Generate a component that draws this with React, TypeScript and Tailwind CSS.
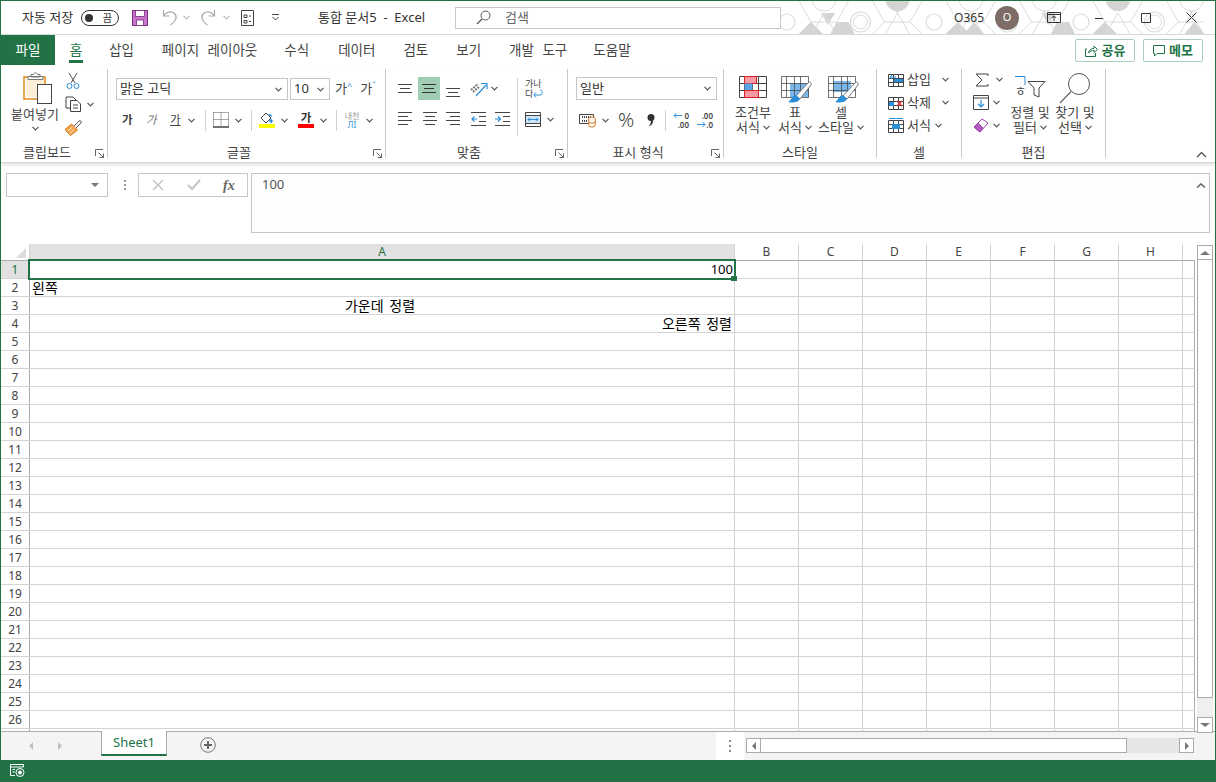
import React from "react"

const blue = "#2b8fd8"
const dark = "#444444"

function Chev({ className = "" }: { className?: string }) {
  return (
    <svg width="7" height="5" viewBox="0 0 7 5" className={className}>
      <path d="M0.5 0.8 L3.5 3.8 L6.5 0.8" fill="none" stroke="#555" strokeWidth="1.2" />
    </svg>
  )
}

function Launcher() {
  return (
    <svg width="9" height="9" viewBox="0 0 9 9">
      <path d="M0.5 7V0.5H8M8.5 8.5L3.5 3.5M8.5 4.5V8.5H4.5" fill="none" stroke="#666" strokeWidth="1" />
    </svg>
  )
}

function Group({ width, label, children, launcher = false, labelClass = "" }: { width: number; label: string; children: React.ReactNode; launcher?: boolean; labelClass?: string }) {
  return (
    <div className="mt-[4px] h-[89px] border-r border-[#c8c8c8]" style={{ width }}>
      <div className="flow-root h-[74px]">{children}</div>
      <div className={"relative flex h-[20px] items-center justify-center text-[13px] text-[#444] " + labelClass}>
        {label}
        {launcher && <span className="absolute right-[3px] top-[6px] flex"><Launcher /></span>}
      </div>
    </div>
  )
}

function HLines({ lines, active = false }: { lines: number[][]; active?: boolean }) {
  return (
    <svg width="16" height="16" viewBox="0 0 16 16" className="block">
      {lines.map((l, i) => (
        <path key={i} d={`M${l[0]} ${l[2] + 0.5}H${l[1]}`} stroke={active ? "#333" : dark} strokeWidth="1" />
      ))}
    </svg>
  )
}

function Save() {
  return (
    <svg width="16" height="16" viewBox="0 0 16 16">
      <path d="M0.5 0.5H15.5V15.5H0.5Z" fill="#c774c9" stroke="#7a2a80" />
      <rect x="3.5" y="0.5" width="9" height="6" fill="#fff" stroke="#7a2a80" strokeWidth="0.8" />
      <rect x="4.5" y="10" width="7" height="5.5" fill="#fff" stroke="#7a2a80" strokeWidth="0.8" />
    </svg>
  )
}

function Undo({ flip = false }: { flip?: boolean }) {
  return (
    <svg width="16" height="17" viewBox="0 0 16 17" style={{ transform: flip ? "scaleX(-1)" : undefined }}>
      <path d="M1.5 1V7H7.5M1.5 7C4 3 9 1.5 12.5 4.5C15.5 7.5 14.5 12 8.5 16" fill="none" stroke="#aaaaaa" strokeWidth="1.2" />
    </svg>
  )
}

function TitlePattern() {
  const c = "#d4d4d4"
  const line = "#dcdcdc"
  const centers = [12, 85.5, 159, 232.5, 306, 379.5]
  return (
    <svg width="440" height="33" viewBox="0 0 440 33" className="absolute right-0 top-0">
      {centers.map((x, i) => (
        <g key={x}>
          {i % 2 === 0 && <path d={`M${x + 12} 33L${x + 24} 21L${x + 36} 33Z`} fill={c} />}
          {i % 2 === 1 && <path d={`M${x + 25} 0H${x + 49}L${x + 37} 12Z`} fill={c} />}
          {i % 3 === 1 && <path d={`M${x - 24} 21H${x - 12}L${x - 6} 33H${x - 30}Z`} fill={c} />}
          {i % 3 === 2 && <path d={`M${x + 40} 21L${x + 50} 33H${x + 30}Z`} fill={c} />}
          {i % 3 === 0 && <path d={`M${x + 34} 12L${x + 48} 12L${x + 41} 24Z`} fill={c} />}
          <path d={`M${x - 24} 21L${x - 12} 0M${x + 12} 0L${x + 24} 21L${x + 12} 33M${x - 24} 21L${x - 12} 33M${x + 24} 21H${x + 49.5}M${x + 25} 33L${x + 37} 12L${x + 49} 33`} fill="none" stroke={line} />
          <circle cx={x + 37} cy={-2} r={12} fill={i % 3 === 1 ? c : "#fff"} stroke={line} />
          <circle cx={x} cy={21} r={i % 2 === 1 ? 10 : 8} fill="#fff" stroke={line} strokeWidth="1.2" />
          {i % 2 === 1 && <circle cx={x} cy={21} r={7} fill={i === 3 ? c : "#fff"} stroke={line} />}
        </g>
      ))}
    </svg>
  )
}

function TitleBar() {
  return (
    <div className="relative flex h-[34px] items-center border-b border-[#d8d8d8] bg-white text-[13px] text-[#333]">
      <TitlePattern />
      <span className="ml-[21px] w-[59px] whitespace-nowrap">자동 저장</span>
      <div className="flex h-[16px] w-[38px] items-center justify-between rounded-full border border-[#333] pl-[3px] pr-[6px]">
        <span className="h-[8px] w-[8px] rounded-full bg-[#333]" />
        <span className="text-[10px] leading-none">끔</span>
      </div>
      <div className="ml-[13px] flex"><Save /></div>
      <div className="ml-[14px] flex"><Undo /></div>
      <Chev className="ml-[5px] opacity-40" />
      <div className="ml-[10px] flex"><Undo flip /></div>
      <Chev className="ml-[7px] opacity-40" />
      <svg width="13" height="16" viewBox="0 0 13 16" className="ml-[11px]">
        <path d="M0.5 0.5H12.5V15.5H0.5Z M3 5H6V7.5H3Z M8 6H10 M3 10.5H6V13H3Z M8 11.5H10" fill="none" stroke="#444" />
      </svg>
      <svg width="9" height="7" viewBox="0 0 9 7" className="ml-[17px]">
        <path d="M1 0.5H8M1.5 3L4.5 6L7.5 3" fill="none" stroke="#444" />
      </svg>
      <span className="ml-[38px] w-[137px] whitespace-nowrap text-[13px]">통합 문서5&nbsp; -&nbsp; Excel</span>
      <div className="relative flex h-[22px] w-[326px] items-center border border-[#c8c8c8] bg-white">
        <svg width="15" height="15" viewBox="0 0 15 15" className="ml-[20px]">
          <circle cx="9.5" cy="5.5" r="4.5" fill="none" stroke="#555" />
          <path d="M6 9L1 14" stroke="#555" strokeWidth="1.2" />
        </svg>
        <span className="ml-[14px] text-[#666]">검색</span>
      </div>
      <div className="relative ml-auto flex items-center">
        <span className="text-[12px] text-[#333]">O365</span>
        <span className="ml-[11px] flex h-[24px] w-[24px] items-center justify-center rounded-full bg-[#7d6d66] text-[11px] text-white">O</span>
        <svg width="14" height="11" viewBox="0 0 14 11" className="ml-[28px]">
          <path d="M0.5 0.5H13.5V10.5H0.5Z M0.5 2.5H13.5" fill="none" stroke="#333" />
          <path d="M7 9V4M4.8 6L7 3.8L9.2 6" fill="none" stroke="#333" />
        </svg>
        <svg width="10" height="10" viewBox="0 0 10 10" className="ml-[33px]"><path d="M1 5.5H9" stroke="#333" /></svg>
        <svg width="10" height="10" viewBox="0 0 10 10" className="ml-[37px]"><path d="M0.5 0.5H9.5V9.5H0.5Z" fill="none" stroke="#333" /></svg>
        <svg width="11" height="11" viewBox="0 0 11 11" className="ml-[35px] mr-[18px]"><path d="M0.5 0.5L10.5 10.5M10.5 0.5L0.5 10.5" stroke="#333" /></svg>
      </div>
    </div>
  )
}

const tabs: [string, number][] = [
  ["삽입", 26], ["페이지 레이아웃", 28], ["수식", 27], ["데이터", 29], ["검토", 28], ["보기", 28], ["개발 도구", 28], ["도움말", 26],
]

function Tabs() {
  return (
    <div className="flex h-[30px] items-stretch bg-white text-[13.5px] text-[#444] [word-spacing:5px]">
      <div className="flex w-[54px] items-center justify-center bg-[#217346] text-white">파일</div>
      <div className="relative ml-[14px] flex w-[14px] items-center justify-center text-[#217346]">
        홈
        <span className="absolute bottom-[2px] left-0 h-[3px] w-[14px] bg-[#217346]" />
      </div>
      {tabs.map(([t, ml]) => (
        <div key={t} className="flex items-center whitespace-nowrap" style={{ marginLeft: ml }}>{t}</div>
      ))}
      <div className="ml-auto mr-[12px] flex items-center gap-[8px] pt-[1px] [word-spacing:0]">
        <div className="flex h-[23px] w-[60px] items-center justify-center gap-[4px] rounded-[2px] border border-[#a9d0bb] text-[13px] font-bold text-[#217346]">
          <svg width="13" height="12" viewBox="0 0 13 12"><path d="M2 4H0.5V11.5H10.5V8M3.5 8C4 5 6 3.5 9 3.5V1L12.5 4.5L9 7.5V5.5C7 5.5 5 6 3.5 8Z" fill="none" stroke="#217346" /></svg>
          공유
        </div>
        <div className="flex h-[23px] w-[60px] items-center justify-center gap-[4px] rounded-[2px] border border-[#a9d0bb] text-[13px] font-bold text-[#217346]">
          <svg width="12" height="12" viewBox="0 0 12 12"><path d="M0.5 0.5H11.5V8.5H4L1.5 11V8.5H0.5Z" fill="none" stroke="#217346" /></svg>
          메모
        </div>
      </div>
    </div>
  )
}

function Grid3({ kind }: { kind: "cond" | "table" | "cell" }) {
  return (
    <svg width="32" height="27" viewBox="0 0 32 27" className="block">
      {kind === "table" && <rect x="9" y="7" width="19" height="14" fill="#7ab8ec" />}
      {kind === "cell" && <rect x="5" y="5" width="18" height="11" fill="#7ab8ec" />}
      <path d="M0.5 0.5H27.5V21.5H0.5Z M0.5 7.5H27.5 M0.5 14.5H27.5 M5.5 0.5V21.5 M13.5 0.5V21.5 M19.5 0.5V21.5" fill="none" stroke="#444" strokeWidth="1" opacity={kind === "cond" ? 1 : 0.75} />
      {kind === "cond" && <>
        <rect x="5.5" y="0.5" width="12" height="7" fill="#f59aa2" stroke="#e01f26" />
        <rect x="5.5" y="7.5" width="8" height="7" fill="#5aa5e6" />
        <rect x="5.5" y="14.5" width="14" height="7" fill="#f59aa2" stroke="#e01f26" />
      </>}
      {kind !== "cond" && <>
        <path d="M15 20L27 7C29 5 31 7 30 9L19 23Z" fill="#fff" stroke="#777" />
        <path d="M7 26C10 25 11 19 15 19L19 23C17 27 11 27 7 26Z" fill={blue} />
      </>}
    </svg>
  )
}

function Clipboard() {
  return (
    <div className="flex">
      <div className="ml-[10px] flex w-[48px] flex-col items-center">
        <svg width="30" height="32" viewBox="0 0 30 32" className="mt-[3px] translate-x-[3px]">
          <path d="M1 5H22V27H1Z" fill="#fff" stroke="#e08a1e" strokeWidth="1.5" />
          <path d="M3 7H21V25H3Z" fill="#fdeed8" />
          <path d="M8 5V2.5H10.5C11.5 0 13.5 0 14.5 2.5H17V5Z M5 4.5H20V7.5H5Z" fill="#fff" stroke="#777" />
          <rect x="14.5" y="12.5" width="14" height="19" fill="#fff" stroke="#444" />
        </svg>
        <span className="mt-[3px] whitespace-nowrap text-[13px] leading-[15px] text-[#444]">붙여넣기</span>
        <Chev className="mt-[4px]" />
      </div>
      <div className="ml-[6px] flex flex-col">
        <svg width="16" height="18" viewBox="0 0 16 18" className="mt-[3px]">
          <path d="M4 1L10 11M12 1L6 11" stroke="#555" fill="none" />
          <circle cx="4.5" cy="14" r="2.5" fill="none" stroke={blue} /><circle cx="11.5" cy="14" r="2.5" fill="none" stroke={blue} />
        </svg>
        <div className="mt-[6px] flex items-center">
          <svg width="16" height="16" viewBox="0 0 16 16">
            <path d="M5 12H1V1H8L11 4" fill="none" stroke="#444" />
            <path d="M5.5 4.5H12L15.5 8V15.5H5.5Z M8 9H13 M8 12H13" fill="#fff" stroke="#444" />
          </svg>
          <Chev className="ml-[6px]" />
        </div>
        <svg width="17" height="16" viewBox="0 0 17 16" className="mt-[8px]">
          <path d="M0 9.5L6.5 4L12.5 10L5.5 15.5Z" fill="#f3a64d" stroke="#d6761a" />
          <path d="M3 11L7.5 7M5 13.5L9 9.5" stroke="#fff" strokeWidth="0.8" />
          <path d="M9 6L14 1C15 0 17 1 16 3L11 8" fill="#fff" stroke="#555" />
        </svg>
      </div>
    </div>
  )
}

function Select({ className, text }: { className: string; text: string }) {
  return (
    <div className={"flex h-[22px] items-center justify-between border border-[#c6c6c6] bg-white pl-[3px] pr-[5px] text-[13px] text-[#333] " + className}>
      <span>{text}</span>
      <Chev />
    </div>
  )
}

function Sep({ className = "" }: { className?: string }) {
  return <span className={"h-[21px] w-px bg-[#d0d0d0] " + className} />
}

function FontGroup() {
  return (
    <div className="pl-[8px]">
      <div className="mt-[9px] flex items-center">
        <Select className="w-[172px]" text="맑은 고딕" />
        <Select className="ml-[2px] w-[40px]" text="10" />
        <span className="ml-[5px] text-[13px] text-[#444]">가<sup className="text-[9px] text-[#2b8fd8]">^</sup></span>
        <span className="ml-[8px] text-[13px] text-[#444]">가<sup className="text-[9px] text-[#2b8fd8]">ˇ</sup></span>
      </div>
      <div className="mt-[9px] flex h-[22px] items-center text-[11.5px] text-[#444]">
        <span className="ml-[6px] w-[13px] font-bold">가</span>
        <span className="ml-[11px] w-[13px] italic text-[#777]">가</span>
        <span className="ml-[11px] w-[13px] underline">가</span>
        <Chev className="ml-[5px]" />
        <Sep className="ml-[10px]" />
        <svg width="16" height="16" viewBox="0 0 16 16" className="ml-[7px]">
          <path d="M0.5 0.5H15.5V14 M0.5 0.5V14 M0.5 7.5H15.5 M8 0.5V14" fill="none" stroke="#555" strokeDasharray="1 1" />
          <path d="M0 15H16" stroke="#111" strokeWidth="1.2" />
        </svg>
        <Chev className="ml-[6px]" />
        <Sep className="ml-[9px]" />
        <div className="ml-[7px] flex w-[16px] flex-col items-center">
          <svg width="14" height="12" viewBox="0 0 14 12">
            <path d="M1 6L6 1L11 6L6 11Z" fill="#fff" stroke="#444" />
            <path d="M11 7C9 8 9 10 11 11C13 10 13 8 11 7Z M8 3C10 1.5 11 2 12 5" fill={blue} stroke={blue} strokeWidth="0.5" />
          </svg>
          <span className="h-[4px] w-[16px] bg-[#ffff00]" />
        </div>
        <Chev className="ml-[6px]" />
        <div className="ml-[10px] flex w-[16px] flex-col items-center">
          <span className="h-[12px] text-[11.5px] font-bold leading-[12px] text-[#333]">가</span>
          <span className="h-[4px] w-[16px] bg-[#ff0000]" />
        </div>
        <Chev className="ml-[6px]" />
        <Sep className="ml-[9px]" />
        <div className="ml-[7px] flex w-[16px] flex-col items-center text-[8px] leading-[9px] text-[#999]">
          <span>내천</span>
          <span className="text-[#2b8fd8]">ЛI</span>
        </div>
        <Chev className="ml-[6px]" />
      </div>
    </div>
  )
}

function Indent({ dir }: { dir: "l" | "r" }) {
  return (
    <svg width="15" height="14" viewBox="0 0 15 14" className="block">
      <path d="M0 0.5H15 M8 4.5H15 M8 9.5H15 M0 13.5H15" stroke={dark} fill="none" />
      <path d={dir === "l" ? "M6 7H1M3.5 4.5L1 7L3.5 9.5" : "M0 7H5M3 4.5L5.5 7L3 9.5"} stroke={blue} fill="none" strokeWidth="1.2" />
    </svg>
  )
}

function AlignGroup() {
  return (
    <div className="pl-[11px]">
      <div className="mt-[8px] flex h-[23px] items-center">
        <div className="w-[16px]"><HLines lines={[[1, 15, 3], [3, 13, 7], [1, 15, 11]]} /></div>
        <div className="ml-[5px] flex h-[23px] w-[22px] items-center justify-center bg-[#a0cdb3]"><HLines lines={[[1, 15, 3], [3, 13, 7], [1, 15, 11]]} active /></div>
        <div className="ml-[5px] mt-[4px] w-[16px]"><HLines lines={[[1, 15, 5], [3, 13, 9], [1, 15, 13]]} /></div>
        <svg width="18" height="16" viewBox="0 0 18 16" className="ml-[9px]">
          <path d="M1 9L8 3 M3 11L9 6" stroke="#777" strokeWidth="2" strokeDasharray="2 1" />
          <path d="M6 15L16 4M11 2.5H17V8" fill="none" stroke={blue} strokeWidth="1.2" />
        </svg>
        <Chev className="ml-[3px]" />
        <Sep className="ml-[19px] h-[58px] translate-y-[18px]" />
        <div className="ml-[7px] flex flex-col text-[9px] leading-[10px] text-[#444]">
          <span>가나</span>
          <span className="flex items-center">다<svg width="10" height="9" viewBox="0 0 10 9"><path d="M1 6H7C10 6 10 1 7 1M3 3.5L0.8 6L3 8.5" fill="none" stroke={blue} /></svg></span>
        </div>
      </div>
      <div className="ml-[1px] mt-[8px] flex h-[22px] items-center">
        <div className="w-[25px]"><HLines lines={[[0, 14, 1], [0, 10, 5], [0, 14, 9], [0, 10, 13]]} /></div>
        <div className="w-[23px]"><HLines lines={[[0, 14, 1], [2, 12, 5], [0, 14, 9], [2, 12, 13]]} /></div>
        <div className="w-[25px]"><HLines lines={[[0, 14, 1], [4, 14, 5], [0, 14, 9], [4, 14, 13]]} /></div>
        <div className="w-[24px]"><Indent dir="l" /></div>
        <div className="w-[30px]"><Indent dir="r" /></div>
        <svg width="16" height="15" viewBox="0 0 16 15">
          <rect x="1" y="3.5" width="14" height="8" fill="#d4e7f8" />
          <path d="M0.5 0.5H15.5V14.5H0.5Z M0.5 3.5H15.5 M0.5 11.5H15.5" fill="none" stroke={dark} />
          <path d="M3 7.5H13M5 5.5L3 7.5L5 9.5M11 5.5L13 7.5L11 9.5" fill="none" stroke={blue} />
        </svg>
        <Chev className="ml-[6px]" />
      </div>
    </div>
  )
}

function NumberGroup() {
  return (
    <div className="pl-[8px]">
      <div className="mt-[8px] flex">
        <Select className="h-[23px] w-[141px]" text="일반" />
      </div>
      <div className="mt-[8px] flex h-[24px] items-center">
        <svg width="18" height="15" viewBox="0 0 18 15" className="ml-[3px]">
          <path d="M0.5 1.5H14.5V10.5H0.5Z" fill="none" stroke={dark} />
          <path d="M3 4H12M3 8H8" stroke={dark} strokeWidth="2" strokeDasharray="1 1" />
          <ellipse cx="13" cy="5.5" rx="3.2" ry="1.5" fill="#fff" stroke="#d6761a" />
          <path d="M9.8 5.5V12.5C10.5 14.5 15.5 14.5 16.2 12.5V5.5" fill="#fff" stroke="#d6761a" />
          <path d="M9.8 9C11 10.5 15 10.5 16.2 9" fill="none" stroke="#d6761a" />
        </svg>
        <Chev className="ml-[5px]" />
        <span className="ml-[9px] w-[17px] text-[20px] font-light leading-none text-[#444]">%</span>
        <svg width="8" height="13" viewBox="0 0 8 13" className="ml-[12px]">
          <circle cx="4" cy="3.5" r="3.5" fill="#333" />
          <path d="M5 5C7.5 8 5 11.5 1.5 12.5C3.5 10.5 4.5 8 3.5 6Z" fill="#333" />
        </svg>
        <Sep className="ml-[10px]" />
        <div className="ml-[7px] flex w-[16px] flex-col text-[8px] font-semibold leading-[9px] text-[#444]">
          <span className="flex items-center justify-between"><svg width="9" height="7" viewBox="0 0 9 7"><path d="M9 3.5H1M3.5 1L1 3.5L3.5 6" fill="none" stroke={blue} /></svg>0</span>
          <span className="text-right">.00</span>
        </div>
        <div className="ml-[8px] flex w-[16px] flex-col text-[8px] font-semibold leading-[9px] text-[#444]">
          <span className="text-right">.00</span>
          <span className="flex items-center justify-between"><svg width="9" height="7" viewBox="0 0 9 7"><path d="M0 3.5H8M5.5 1L8 3.5L5.5 6" fill="none" stroke={blue} /></svg>.0</span>
        </div>
      </div>
    </div>
  )
}

function BigBtn({ icon, top, bottom, width, iconPad = 0 }: { icon: React.ReactNode; top: string; bottom: string; width: number; iconPad?: number }) {
  return (
    <div className="flex flex-col items-center text-[13px] leading-[15px] text-[#444]" style={{ width }}>
      <div className="flex h-[36px] items-start justify-center pt-[7px]" style={{ paddingLeft: iconPad }}>{icon}</div>
      <span className="whitespace-nowrap">{top}</span>
      <span className="flex items-center gap-[3px] whitespace-nowrap">{bottom}<Chev /></span>
    </div>
  )
}

function CellRow({ icon, label, chevClass }: { icon: React.ReactNode; label: string; chevClass: string }) {
  return (
    <div className="flex h-[23px] items-center text-[13px] text-[#444]">
      {icon}
      <span className="ml-[3px] w-[26px] whitespace-nowrap">{label}</span>
      <Chev className={chevClass} />
    </div>
  )
}

function MiniGrid({ children }: { children: React.ReactNode }) {
  return (
    <svg width="16" height="15" viewBox="0 0 16 15">
      <path d="M0.5 2.5H15.5V14.5H0.5Z M0.5 6.5H15.5 M0.5 10.5H15.5 M5.5 2.5V14.5 M10.5 2.5V14.5" fill="none" stroke={dark} />
      {children}
    </svg>
  )
}

function EditGroup() {
  return (
    <div className="flex">
      <div className="-mt-[1px] ml-[11px] flex w-[32px] flex-col">
        <div className="flex h-[23px] items-center">
          <span className="flex w-[18px] justify-center"><svg width="14" height="14" viewBox="0 0 14 14"><path d="M13 3V1H1L7 7L1 13H13V11" fill="none" stroke="#444" /></svg></span>
          <Chev className="ml-[5px]" />
        </div>
        <div className="flex h-[23px] items-center">
          <svg width="16" height="15" viewBox="0 0 16 15">
            <path d="M0.5 0.5H15.5V14.5H0.5Z M0.5 3H15.5" fill="none" stroke={dark} />
            <path d="M8 5V12M5 9L8 12L11 9" fill="none" stroke={blue} strokeWidth="1.2" />
          </svg>
          <Chev className="ml-[4px]" />
        </div>
        <div className="flex h-[23px] items-center">
          <svg width="16" height="15" viewBox="0 0 16 15">
            <path d="M1 9L9 1L15 5L7 14Z" fill="#fff" stroke="#9b3fa8" />
            <path d="M1 9L5 5L10 10L7 14Z" fill="#b25dbf" stroke="#9b3fa8" />
          </svg>
          <Chev className="ml-[4px]" />
        </div>
      </div>
      <BigBtn width={50} top="정렬 및" bottom="필터" icon={
        <svg width="31" height="23" viewBox="0 0 31 23">
          <path d="M0 0.5H10V9" fill="none" stroke={blue} />
          <text x="0" y="20" fontSize="12" fill="#444" fontFamily="'Noto Sans CJK KR',sans-serif">ㅎ</text>
          <path d="M13 5.5H30L24 12V21L19 19V12Z" fill="#fff" stroke="#444" />
        </svg>
      } />
      <BigBtn width={40} top="찾기 및" bottom="선택" icon={
        <svg width="32" height="32" viewBox="0 0 32 32" className="-mt-[4px]">
          <circle cx="20" cy="12" r="10.5" fill="#fff" stroke="#555" />
          <path d="M12 19.5L1 31" stroke="#666" strokeWidth="1.2" />
        </svg>
      } />
    </div>
  )
}

function Ribbon() {
  return (
    <div className="relative flex h-[98px] items-start border-b border-[#d8d8d8] bg-white shadow-[0_2px_3px_rgba(0,0,0,0.12)]">
      <Group width={107} label="클립보드" launcher labelClass="pr-[14px]"><Clipboard /></Group>
      <Group width={278} label="글꼴" launcher labelClass="pr-[15px]"><FontGroup /></Group>
      <Group width={182} label="맞춤" launcher labelClass="pr-[15px]"><AlignGroup /></Group>
      <Group width={156} label="표시 형식" launcher labelClass="pr-[15px]"><NumberGroup /></Group>
      <Group width={153} label="스타일">
        <div className="ml-[8px] flex">
          <BigBtn width={42} top="조건부" bottom="서식" iconPad={3} icon={<Grid3 kind="cond" />} />
          <BigBtn width={42} top="표" bottom="서식" iconPad={3} icon={<Grid3 kind="table" />} />
          <BigBtn width={50} top="셀" bottom="스타일" iconPad={5} icon={<Grid3 kind="cell" />} />
        </div>
      </Group>
      <Group width={85} label="셀">
        <div className="-mt-[1px] ml-[11px] flex flex-col">
          <CellRow label="삽입" chevClass="ml-[9px]" icon={<MiniGrid><rect x="6" y="7" width="9" height="3" fill={blue} /><path d="M8 5H2M4 3L2 5L4 7" stroke={blue} fill="none" /></MiniGrid>} />
          <CellRow label="삭제" chevClass="ml-[9px]" icon={<MiniGrid><rect x="1" y="7" width="5" height="4" fill={blue} /><path d="M9 6L14 11M14 6L9 11" stroke="#e03030" strokeWidth="1.3" /></MiniGrid>} />
          <CellRow label="서식" chevClass="ml-[2px]" icon={<MiniGrid><rect x="4" y="6" width="8" height="5" fill={blue} /><path d="M1 0.5H15" stroke={blue} /></MiniGrid>} />
        </div>
      </Group>
      <Group width={144} label="편집"><EditGroup /></Group>
      <svg width="11" height="7" viewBox="0 0 11 7" className="absolute bottom-[4px] right-[8px]"><path d="M1 6L5.5 1.5L10 6" fill="none" stroke="#444" strokeWidth="1.2" /></svg>
    </div>
  )
}

function FormulaBar() {
  return (
    <div className="mt-[10px] flex h-[60px] items-start pl-[5px] pr-[5px] text-[13px]">
      <div className="flex h-[24px] w-[102px] items-center justify-end border border-[#c6c6c6] pr-[8px]">
        <span className="h-0 w-0 border-x-[4px] border-t-[4px] border-x-transparent border-t-[#777]" />
      </div>
      <div className="ml-[15px] flex h-[24px] w-[3px] flex-col items-center justify-center gap-[2px]">
        <span className="h-[2px] w-[2px] bg-[#999]" /><span className="h-[2px] w-[2px] bg-[#999]" /><span className="h-[2px] w-[2px] bg-[#999]" />
      </div>
      <div className="ml-[12px] flex h-[24px] w-[110px] items-center border border-[#c6c6c6]">
        <svg width="12" height="12" viewBox="0 0 12 12" className="ml-[13px]"><path d="M1 1L11 11M11 1L1 11" stroke="#c4c4c4" strokeWidth="1.5" /></svg>
        <svg width="14" height="12" viewBox="0 0 14 12" className="ml-[23px]"><path d="M1 6L5 10L13 1" fill="none" stroke="#c4c4c4" strokeWidth="2" /></svg>
        <span className="ml-[22px] text-[14px] font-bold italic text-[#666] [font-family:'Liberation_Serif',serif]">fx</span>
      </div>
      <div className="ml-[3px] flex h-[60px] flex-1 justify-between border border-[#c6c6c6] bg-[#fdfdfd] pl-[10px] pr-[4px] pt-[1px] text-[#555]">
        <span>100</span>
        <svg width="8" height="5" viewBox="0 0 8 5" className="mt-[8px]"><path d="M0 4.5L4 1L8 4.5" fill="none" stroke="#666" strokeWidth="1.6" /></svg>
      </div>
    </div>
  )
}

const colWidths: [string, number][] = [
  ["A", 705], ["B", 64], ["C", 64], ["D", 64], ["E", 64], ["F", 64], ["G", 64], ["H", 64],
]

const cellText: Record<number, { text: string; cls: string }> = {
  1: { text: "100", cls: "justify-end pr-[1px] text-[13px]" },
  2: { text: "왼쪽", cls: "justify-start" },
  3: { text: "가운데 정렬", cls: "justify-center pr-[6px]" },
  4: { text: "오른쪽 정렬", cls: "justify-end" },
}

function Sheet() {
  // row 27 is only there for the 2px of grid that peek out above the tab strip
  const rows = Array.from({ length: 27 }, (_, i) => i + 1)
  return (
    <div className="relative flex h-[487px]">
      <div className="h-[487px] w-[1194px] overflow-hidden">
        <div className="flex h-[17px] border-b border-[#ababab] text-[12px] leading-[16px] text-[#444]">
          <div className="relative w-[29px] border-r border-[#d4d4d4]">
            <span className="absolute bottom-[2px] right-[3px] h-0 w-0 border-b-[10px] border-l-[10px] border-b-[#dcdcdc] border-l-transparent" />
          </div>
          {colWidths.map(([c, w], i) => (
            <div key={c} className={"flex items-center justify-center border-r border-[#d4d4d4] " + (i === 0 ? "bg-[#e1e1e1] text-[#217346]" : "")} style={{ width: w }}>{c}</div>
          ))}
          <div className="flex-1" />
        </div>
        {rows.map((r) => (
          <div key={r} className="flex h-[18px] border-b border-r border-b-[#d4d4d4] border-r-[#ababab] text-[14px] leading-[17px] text-black [word-spacing:2px]">
            <div className={"flex w-[29px] items-center justify-center border-r border-[#ababab] text-[12px] " + (r === 1 ? "bg-[#e1e1e1] text-[#217346]" : "text-[#444]")}>{r < 27 ? r : null}</div>
            {colWidths.map(([c, w], i) => (
              <div key={c} className={"flex items-center border-r border-[#d4d4d4] px-[2px] " + (i === 0 && cellText[r] ? cellText[r].cls : "")} style={{ width: w }}>
                {i === 0 && cellText[r] ? cellText[r].text : null}
              </div>
            ))}
          </div>
        ))}
      </div>
      <span className="absolute left-[27px] top-[15px] h-[21px] w-[708px] border-2 border-[#217346]" />
      <span className="absolute left-[730px] top-[32px] h-[5px] w-[6px] bg-[#217346]" />
      <div className="relative z-10 ml-[2px] mt-[1px] flex h-[488px] w-[16px] flex-col bg-[#efefef]">
        <div className="flex h-[15px] items-center justify-center border border-[#ababab] bg-white">
          <span className="h-0 w-0 border-x-[5px] border-b-[4px] border-x-transparent border-b-[#777]" />
        </div>
        <div className="h-[438px] border border-t-0 border-[#ababab] bg-white" />
        <div className="flex-1" />
        <div className="flex h-[16px] items-center justify-center border border-[#ababab] bg-white">
          <span className="h-0 w-0 border-x-[5px] border-t-[4px] border-x-transparent border-t-[#777]" />
        </div>
      </div>
    </div>
  )
}

function SheetTabs() {
  return (
    <div className="flex h-[29px] items-start border-t border-[#ababab] bg-[#f4f4f4] text-[13px]">
      <span className="ml-[28px] mt-[10px] h-0 w-0 border-y-[4px] border-r-[4px] border-y-transparent border-r-[#c0c0c0]" />
      <span className="ml-[25px] mt-[10px] h-0 w-0 border-y-[4px] border-l-[4px] border-y-transparent border-l-[#c0c0c0]" />
      <div className="-mt-px ml-[39px] flex h-[25px] w-[66px] items-center justify-center border-x border-b-2 border-x-[#ababab] border-b-[#217346] bg-white text-[#217346]">Sheet1</div>
      <svg width="16" height="16" viewBox="0 0 16 16" className="ml-[33px] mt-[5px]">
        <circle cx="8" cy="8" r="7.3" fill="none" stroke="#777" />
        <path d="M8 4V12M4 8H12" stroke="#666" strokeWidth="2" />
      </svg>
      <div className="ml-[500px] flex h-[28px] w-[28px] items-center justify-center bg-white">
        <div className="flex flex-col gap-[3px]"><span className="h-[2px] w-[2px] bg-[#888]" /><span className="h-[2px] w-[2px] bg-[#888]" /><span className="h-[2px] w-[2px] bg-[#888]" /></div>
      </div>
      <div className="ml-[2px] mt-[6px] flex h-[15px] w-[448px] bg-[#e6e6e6]">
        <div className="flex w-[15px] items-center justify-center border border-[#ababab] bg-white"><span className="h-0 w-0 border-y-[4px] border-r-[4px] border-y-transparent border-r-[#777]" /></div>
        <div className="h-full w-[366px] border-y border-r border-[#ababab] bg-white" />
        <div className="flex-1" />
        <div className="flex w-[15px] items-center justify-center border border-[#ababab] bg-white"><span className="h-0 w-0 border-y-[4px] border-l-[4px] border-y-transparent border-l-[#777]" /></div>
      </div>
    </div>
  )
}

export default function App() {
  return (
    <div className="relative h-[782px] w-[1216px] overflow-hidden border-x border-t border-[#217346] bg-white [font-family:'Noto_Sans','Noto_Sans_CJK_KR',sans-serif]">
      <TitleBar />
      <Tabs />
      <Ribbon />
      <FormulaBar />
      <div className="h-[11px]" />
      <Sheet />
      <SheetTabs />
      <div className="flex h-[22px] items-center bg-[#217346] pl-[9px]">
        <svg width="15" height="14" viewBox="0 0 15 14">
          <path d="M0.5 0.5H13.5V3H0.5Z M0.5 3V11.5H5 M2.5 5.5H5 M2.5 8H5" fill="none" stroke="#fff" />
          <circle cx="10" cy="8.5" r="4" fill="none" stroke="#fff" />
          <circle cx="10" cy="8.5" r="2" fill="#fff" />
        </svg>
      </div>
    </div>
  )
}
